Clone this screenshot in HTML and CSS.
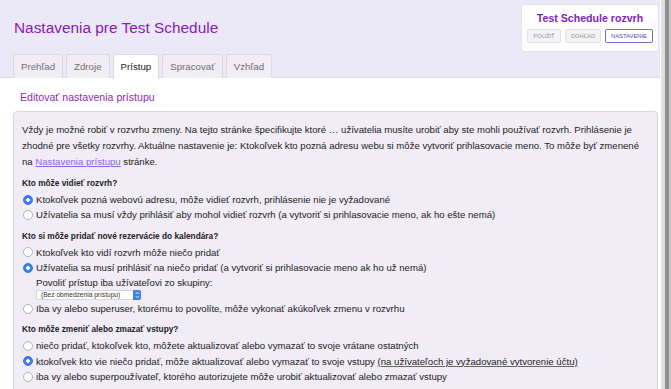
FILE: index.html
```html
<!DOCTYPE html>
<html lang="sk">
<head>
    <meta charset="UTF-8">
    <title>Nastavenia pre Test Schedule</title>
    <link rel="stylesheet" href="styles.css">
</head>
<body>
<div class="window">
    <div class="page">
        <header class="top">
            <div class="top-row">
                <h1 class="title">Nastavenia pre Test Schedule</h1>
                <div class="sched-box">
                    <div class="sched-name">Test Schedule rozvrh</div>
                    <div class="sched-buttons">
                        <span class="mini-btn">Použiť</span>
                        <span class="mini-btn">Dohľad</span>
                        <span class="mini-btn current">Nastavenie</span>
                    </div>
                </div>
            </div>
            <nav class="tabs">
                <span class="tab">Prehľad</span>
                <span class="tab">Zdroje</span>
                <span class="tab active">Prístup</span>
                <span class="tab">Spracovať</span>
                <span class="tab">Vzhľad</span>
            </nav>
        </header>

        <main class="content">
            <h2 class="section-title">Editovať nastavenia prístupu</h2>
            <div class="panel">
                <p class="intro">Vždy je možné robiť v rozvrhu zmeny. Na tejto stránke špecifikujte ktoré … užívatelia musíte urobiť aby ste mohli používať rozvrh. Prihlásenie je zhodné pre všetky rozvrhy. Aktuálne nastavenie je: Ktokoľvek kto pozná adresu webu si môže vytvoriť prihlasovacie meno. To môže byť zmenené na <a href="#" class="link">Nastavenia prístupu</a> stránke.</p>

                <div class="question">
                    <div class="q-title">Kto môže vidieť rozvrh?</div>
                    <label class="option"><input type="radio" name="view" checked> Ktokoľvek pozná webovú adresu, môže vidieť rozvrh, prihlásenie nie je vyžadované</label>
                    <label class="option"><input type="radio" name="view"> Užívatelia sa musí vždy prihlásiť aby mohol vidieť rozvrh (a vytvoriť si prihlasovacie meno, ak ho ešte nemá)</label>
                </div>

                <div class="question">
                    <div class="q-title">Kto si môže pridať nové rezervácie do kalendára?</div>
                    <label class="option"><input type="radio" name="add"> Ktokoľvek kto vidí rozvrh môže niečo pridať</label>
                    <label class="option"><input type="radio" name="add" checked> Užívatelia sa musí prihlásiť na niečo pridať (a vytvoriť si prihlasovacie meno ak ho už nemá)</label>
                    <div class="sub-option">
                        <div class="sub-label">Povoliť prístup iba užívateľovi zo skupiny:</div>
                        <div class="group-select">
                            <select class="select">
                                <option>(Bez obmedzenia prístupu)</option>
                            </select>
                            <span class="select-arrows">
                                <svg width="5" height="8" viewBox="0 0 5 8"><path d="M0.8 3 L2.5 1.2 L4.2 3 M0.8 5 L2.5 6.8 L4.2 5" fill="none" stroke="#fff" stroke-width="0.9"/></svg>
                            </span>
                        </div>
                    </div>
                    <label class="option"><input type="radio" name="add"> Iba vy alebo superuser, ktorému to povolíte, môže vykonať akúkoľvek zmenu v rozvrhu</label>
                </div>

                <div class="question">
                    <div class="q-title">Kto môže zmeniť alebo zmazať vstupy?</div>
                    <label class="option"><input type="radio" name="edit"> niečo pridať, ktokoľvek kto, môžete aktualizovať alebo vymazať to svoje vrátane ostatných</label>
                    <label class="option"><input type="radio" name="edit" checked> <span>ktokoľvek kto vie niečo pridať, môže aktualizovať alebo vymazať to svoje vstupy <span class="note">(na užívateľoch je vyžadované vytvorenie účtu)</span></span></label>
                    <label class="option"><input type="radio" name="edit"> iba vy alebo superpoužívateľ, ktorého autorizujete môže urobiť aktualizovať alebo zmazať vstupy</label>
                </div>
            </div>
        </main>
    </div>
    <div class="edge"></div>
</div>
</body>
</html>
```

FILE: styles.css
```css
html, body {
    margin: 0;
    padding: 0;
    height: 100%;
}

body {
    font-family: "Liberation Sans", Arial, sans-serif;
    color: #222;
    background: #fff;
    overflow: hidden;
}

.window {
    display: flex;
    height: 100%;
}

.page {
    flex: 1;
    min-width: 0;
}

.edge {
    width: 11px;
    background: linear-gradient(to right, #fff 0, #fff 1px, #e4e4e4 1px, #dcdcdc 5px, #8e8e8e 5px, #8e8e8e 9px, #c9c9c9 9px, #c9c9c9 11px);
}

/* header */

.top {
    background: #ebe9f8;
    border-bottom: 1px solid #dedce8;
    padding: 0 1px 0 13px;
    height: 77px;
}

.top-row {
    display: flex;
    justify-content: space-between;
    align-items: flex-start;
    height: 54px;
}

.title {
    margin: 19px 0 0 1px;
    font-size: 15.4px;
    font-weight: normal;
    line-height: 18px;
    color: #8a20b0;
}

.sched-box {
    margin-top: 4px;
    width: 136px;
    height: 46px;
    background: #fff;
    border: 1px solid #e6e4f0;
    border-radius: 4px;
    display: flex;
    flex-direction: column;
    align-items: center;
}

.sched-name {
    margin-top: 6px;
    font-size: 10.6px;
    font-weight: bold;
    line-height: 14px;
    color: #8224b8;
}

.sched-buttons {
    display: flex;
    gap: 4px;
    margin-top: 4px;
}

.mini-btn {
    display: flex;
    align-items: center;
    justify-content: center;
    height: 12px;
    padding: 0 4px;
    font-size: 5.8px;
    text-transform: uppercase;
    color: #999;
    background: #f3f2f5;
    border: 1px solid #e2e0e6;
    border-radius: 2px;
}

.mini-btn:nth-child(1) { width: 24px; }
.mini-btn:nth-child(2) { width: 26px; }

.mini-btn.current {
    width: 38px;
    color: #5b46b8;
    background: #fff;
    border-color: #7d6ccf;
}

.tabs {
    display: flex;
    gap: 3px;
}

.tab {
    height: 23px;
    line-height: 23px;
    padding: 0 7px;
    font-size: 9.7px;
    color: #707070;
    background: #f0edf4;
    border: 1px solid #dcd9e2;
    border-bottom: none;
    border-radius: 3px 3px 0 0;
}

.tab.active {
    height: 24px;
    color: #1a1a1a;
    background: #fff;
}

/* content */

.content {
    padding: 0 2px 0 13px;
}

.section-title {
    margin: 0;
    padding: 12px 0 0 7px;
    font-size: 10.6px;
    font-weight: normal;
    line-height: 14px;
    color: #9229b8;
}

.panel {
    margin-top: 7px;
    padding: 10px 8px 20px 8px;
    background: #f1edf6;
    border: 1px solid #dbd7e2;
    border-radius: 4px;
    font-size: 9.6px;
}

.intro {
    margin: 0;
    line-height: 16px;
}

.link {
    color: #8a62e6;
}

.question {
    margin-top: 6px;
}

.q-title {
    font-size: 8.3px;
    font-weight: bold;
    line-height: 14px;
    margin-bottom: 2px;
}

.option {
    display: flex;
    align-items: center;
    gap: 3px;
    line-height: 15.3px;
}

.option input {
    appearance: none;
    -webkit-appearance: none;
    margin: 0 0 0 1px;
    width: 10px;
    height: 10px;
    border: 1px solid #b3b3b3;
    border-radius: 50%;
    background: #fff;
    flex-shrink: 0;
}

.option input:checked {
    border-color: #2f74e8;
    background: radial-gradient(circle, #fff 0, #fff 1.6px, #3a80f2 2.1px);
}

.note {
    text-decoration: underline;
    text-decoration-color: #666;
}

.sub-option {
    padding-left: 14px;
}

.sub-label {
    line-height: 15px;
}

.group-select {
    display: flex;
    height: 10px;
    margin-bottom: 1px;
}

.select {
    appearance: none;
    -webkit-appearance: none;
    width: 97px;
    height: 10px;
    margin: 0;
    padding: 0 0 0 4px;
    font-family: "Liberation Sans", Arial, sans-serif;
    font-size: 6.6px;
    line-height: 8px;
    color: #333;
    background: #fff;
    border: 1px solid #d6d6d6;
    border-right: none;
    border-radius: 2px 0 0 2px;
}

.select-arrows {
    width: 8px;
    height: 10px;
    display: flex;
    align-items: center;
    justify-content: center;
    background: #3a80f2;
    border-radius: 0 2px 2px 0;
}
```
